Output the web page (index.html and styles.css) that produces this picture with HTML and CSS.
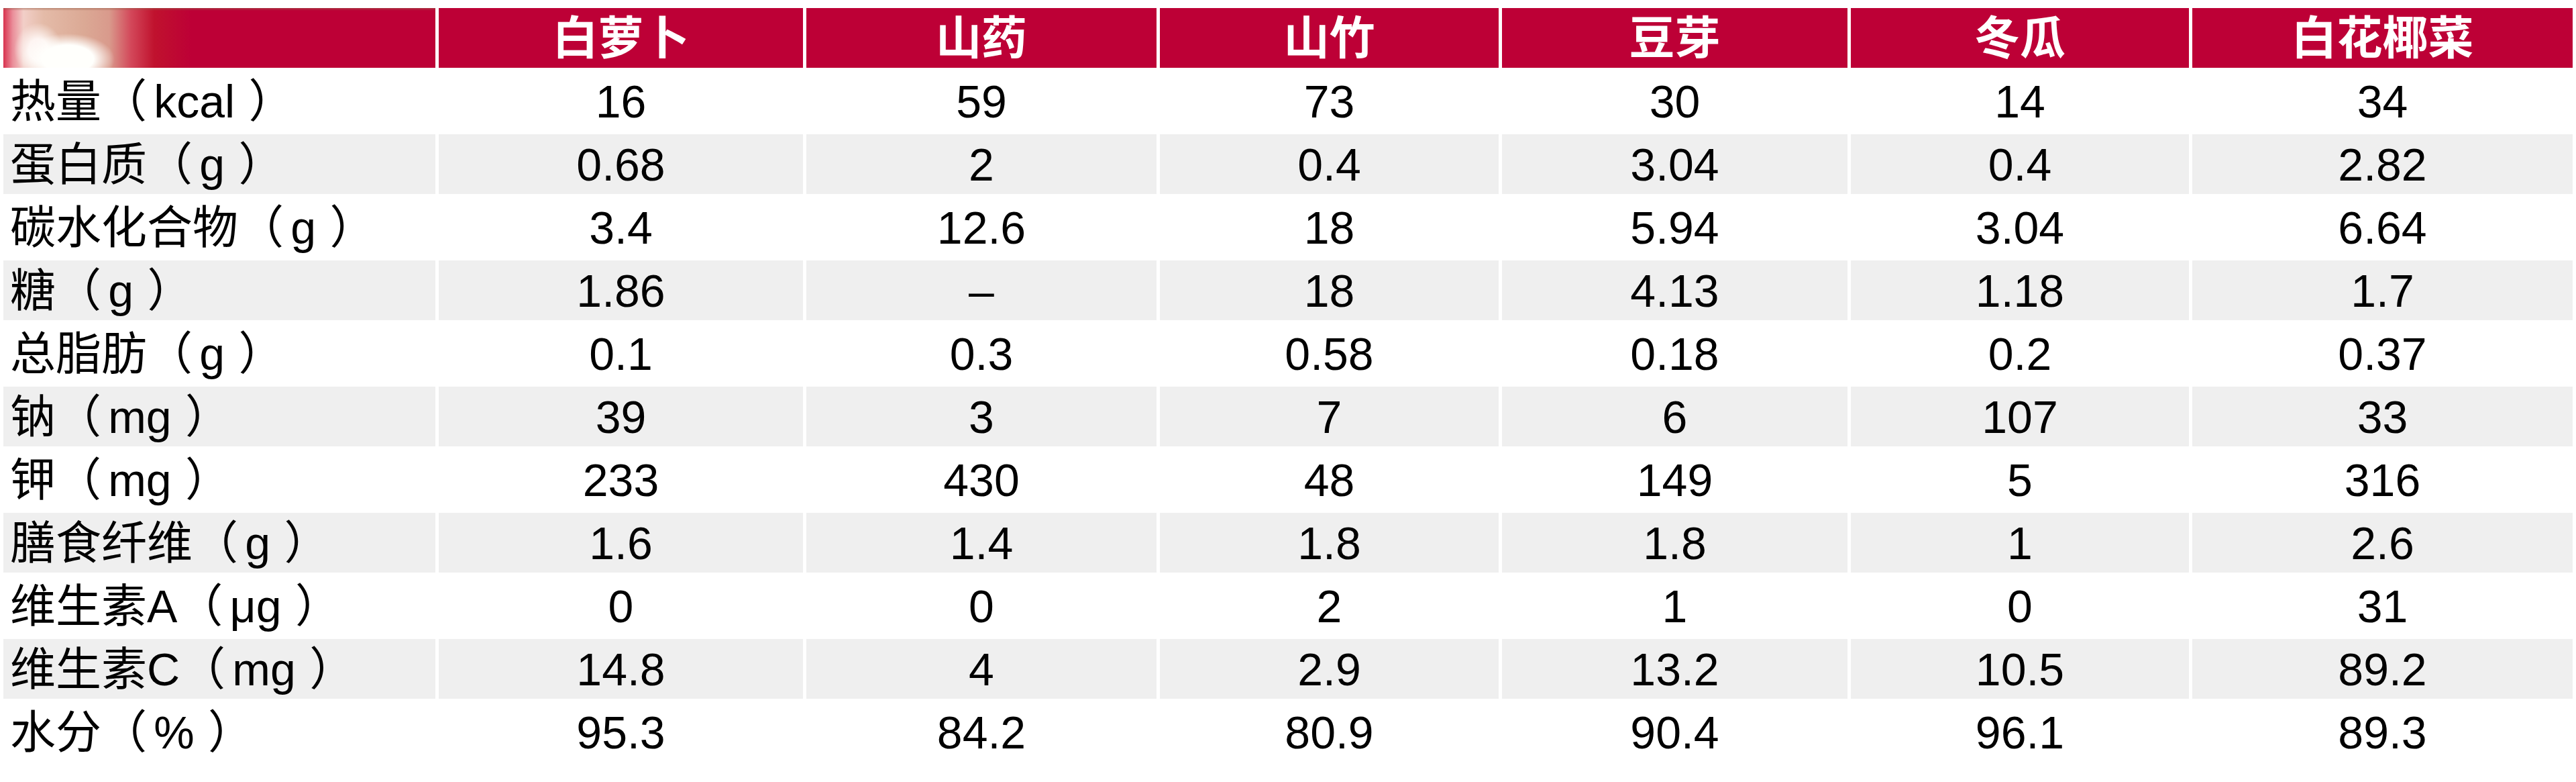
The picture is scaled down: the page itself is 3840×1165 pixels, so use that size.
FILE: index.html
```html
<!DOCTYPE html>
<html lang="zh-CN">
<head>
<meta charset="utf-8">
<title>蔬菜营养成分对比</title>
<link rel="stylesheet" href="styles.css">
</head>
<body>
<table class="nutri">
  <colgroup>
    <col class="c-label">
    <col class="c-luobo">
    <col class="c-shanyao">
    <col class="c-shanzhu">
    <col class="c-douya">
    <col class="c-donggua">
    <col class="c-caihua">
  </colgroup>
  <thead>
    <tr>
      <th class="photo"></th>
      <th>白萝卜</th>
      <th>山药</th>
      <th>山竹</th>
      <th>豆芽</th>
      <th>冬瓜</th>
      <th>白花椰菜</th>
    </tr>
  </thead>
  <tbody>
    <tr><td class="label">热量（<span class="u">kcal</span>）</td><td>16</td><td>59</td><td>73</td><td>30</td><td>14</td><td>34</td></tr>
    <tr class="alt"><td class="label">蛋白质（<span class="u">g</span>）</td><td>0.68</td><td>2</td><td>0.4</td><td>3.04</td><td>0.4</td><td>2.82</td></tr>
    <tr><td class="label">碳水化合物（<span class="u">g</span>）</td><td>3.4</td><td>12.6</td><td>18</td><td>5.94</td><td>3.04</td><td>6.64</td></tr>
    <tr class="alt"><td class="label">糖（<span class="u">g</span>）</td><td>1.86</td><td>–</td><td>18</td><td>4.13</td><td>1.18</td><td>1.7</td></tr>
    <tr><td class="label">总脂肪（<span class="u">g</span>）</td><td>0.1</td><td>0.3</td><td>0.58</td><td>0.18</td><td>0.2</td><td>0.37</td></tr>
    <tr class="alt"><td class="label">钠（<span class="u">mg</span>）</td><td>39</td><td>3</td><td>7</td><td>6</td><td>107</td><td>33</td></tr>
    <tr><td class="label">钾（<span class="u">mg</span>）</td><td>233</td><td>430</td><td>48</td><td>149</td><td>5</td><td>316</td></tr>
    <tr class="alt"><td class="label">膳食纤维（<span class="u">g</span>）</td><td>1.6</td><td>1.4</td><td>1.8</td><td>1.8</td><td>1</td><td>2.6</td></tr>
    <tr><td class="label">维生素A（<span class="u">μg</span>）</td><td>0</td><td>0</td><td>2</td><td>1</td><td>0</td><td>31</td></tr>
    <tr class="alt"><td class="label">维生素C（<span class="u">mg</span>）</td><td>14.8</td><td>4</td><td>2.9</td><td>13.2</td><td>10.5</td><td>89.2</td></tr>
    <tr><td class="label">水分（<span class="u">%</span>）</td><td>95.3</td><td>84.2</td><td>80.9</td><td>90.4</td><td>96.1</td><td>89.3</td></tr>
  </tbody>
</table>
</body>
</html>
```
FILE: styles.css
```css
html, body {
  margin: 0;
  padding: 0;
  background: #ffffff;
}

body {
  font-family: "Liberation Sans", "Noto Sans CJK SC", sans-serif;
  color: #000000;
}

.nutri {
  width: 3840px;
  margin-top: 7px;
  table-layout: fixed;
  border-collapse: separate;
  border-spacing: 5px;
}

.c-label   { width: 644px; }
.c-luobo   { width: 543px; }
.c-shanyao { width: 522px; }
.c-shanzhu { width: 505px; }
.c-douya   { width: 515px; }
.c-donggua { width: 504px; }
.c-caihua  { width: 567px; }

.nutri th,
.nutri td {
  height: 89px;
  padding: 0;
  font-size: 68px;
  line-height: 1;
  text-align: center;
  vertical-align: middle;
  white-space: nowrap;
}

.nutri th {
  background: #bd0036;
  color: #ffffff;
  font-weight: 700;
}

.nutri th.photo {
  background:
    radial-gradient(ellipse 70px 38px at 96px 76px, rgba(255,255,252,1) 55%, rgba(255,250,245,0) 100%),
    radial-gradient(ellipse 36px 40px at 52px 62px, rgba(255,248,246,0.95) 40%, rgba(255,240,240,0) 100%),
    linear-gradient(180deg, rgba(150,90,70,0.55) 0px, rgba(150,90,70,0) 4px),
    linear-gradient(90deg,
      #d8324e 0px,
      #ea8e9a 14px,
      #f2cfc8 30px,
      #e4bba8 60px,
      #dba995 120px,
      #d99a8c 158px,
      #d3485a 190px,
      #c0122e 225px,
      #bd0036 280px,
      #bd0036 100%);
}

.nutri tr.alt td {
  background: #efefef;
}

.nutri td.label {
  text-align: left;
  padding-left: 10px;
}

.u {
  padding: 0 0.3em 0 0.15em;
}
```
